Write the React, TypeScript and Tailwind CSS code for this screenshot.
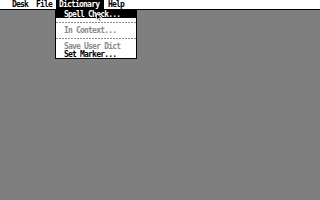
import React from "react";

const font = "font-['DejaVu_Sans_Mono',monospace] text-[8px] leading-[10px] font-bold tracking-[-0.8px] whitespace-pre";

function Sep() {
  return (
    <div className="h-[8px] flex items-center">
      <div className="h-px w-full bg-[repeating-linear-gradient(90deg,#8a8a8a_0_2px,transparent_2px_3px)]" />
    </div>
  );
}

export default function App() {
  return (
    <div className="relative w-[320px] h-[200px] bg-[#7f7f7f] overflow-hidden">
      <div className={`h-[10px] bg-white border-b border-black flex ${font} text-black`}>
        <div className="pl-[12px] w-[36px] h-[9px]">Desk</div>
        <div className="w-[20px] h-[9px]">File</div>
        <div className="w-[48px] h-[9px] bg-black text-white pl-[3px]">Dictionary</div>
        <div className="pl-[4px] h-[9px]">Help</div>
      </div>
      <div className={`absolute left-[55px] top-[9px] w-[82px] bg-white border border-black ${font}`}>
        <div className="h-[8px] bg-black text-white pl-[8px] overflow-hidden leading-[9px]">Spell Check...</div>
        <Sep />
        <div className="h-[8px] text-[#8a8a8a] pl-[8px] leading-[9px]">In Context...</div>
        <Sep />
        <div className="h-[8px] text-[#8a8a8a] pl-[8px] leading-[9px]">Save User Dict</div>
        <div className="h-[8px] text-black pl-[8px] leading-[9px]">Set Marker...</div>
      </div>
      <svg className="absolute left-[96px] top-[13px]" width="7" height="9" viewBox="0 0 7 9">
        <path d="M0.5 0.5 L0.5 7 L2.3 5.3 L3.6 8.2 L4.7 7.7 L3.5 5 L6 5 Z" fill="#000" stroke="#fff" strokeWidth="0.8" />
      </svg>
    </div>
  );
}
